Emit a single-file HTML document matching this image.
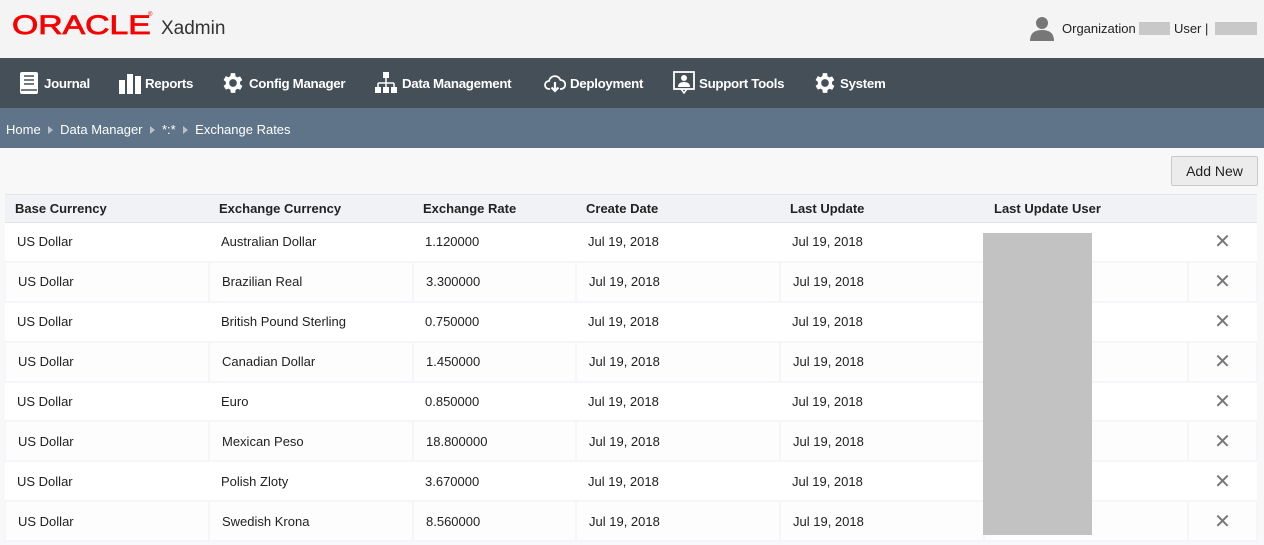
<!DOCTYPE html><html><head><style>
body{margin:0;width:1264px;height:545px;overflow:hidden;background:#f8f8f8;font-family:"Liberation Sans",Arial,sans-serif;position:relative}
.hdr{position:absolute;left:0;top:0;width:1264px;height:58px;background:#f4f4f4}
.nav{position:absolute;left:0;top:58px;width:1264px;height:50px;background:#444f58;color:#fff;font-weight:bold;font-size:13.3px}
.nav span{position:absolute;top:18px;letter-spacing:-0.3px}
.nav svg{position:absolute}
.bc{position:absolute;left:0;top:108px;width:1264px;height:40px;background:#5f7488;color:#fff;font-size:13px}
.bc span{position:absolute;top:14px}
.tri{display:inline-block;width:0;height:0;border-left:5px solid #b7c2cc;border-top:4px solid transparent;border-bottom:4px solid transparent}
table{position:absolute;left:4px;top:194px;width:1254px;border-collapse:collapse;font-size:13px;color:#222}
th{background:#f1f2f6;text-align:left;height:27px;padding:0 0 0 10px;font-size:13px;border-top:1px solid #e3e5ea;border-bottom:1px solid #e0e2e8}
td{height:37.9px;padding:0 0 0 12px;background:#fff}
tr.e td{background:#fdfdfe;border:2px solid #f4f6f9}
.x{color:#777;font-size:20px;text-align:center;padding:0}
</style></head><body>
<div class="hdr">
<div style="position:absolute;left:12px;top:10px;color:#f80000;font-size:27px;-webkit-text-stroke:0.8px #f80000;transform:scaleX(1.25);transform-origin:left;font-family:'Liberation Sans',sans-serif">ORACLE</div>
<div style="position:absolute;left:148px;top:12px;color:#f80000;font-size:6px">®</div>
<div style="position:absolute;left:161px;top:18px;color:#333;font-size:19px">Xadmin</div>
<svg style="position:absolute;left:1029px;top:15px" width="26" height="26"><circle cx="13" cy="8" r="6" fill="#777"/><path d="M1 26 Q1 15 13 15 Q25 15 25 26Z" fill="#777"/></svg>
<div style="position:absolute;left:1062px;top:21px;font-size:13px;color:#222">Organization <span style="display:inline-block;width:31px;height:13px;background:#c8c8c8;vertical-align:-2px"></span> User | <span style="display:inline-block;width:42px;height:13px;background:#c8c8c8;vertical-align:-2px;margin-left:3px"></span></div>
</div>
<div class="nav">
<svg style="left:20px;top:14px" width="18" height="22"><rect x="0" y="0" width="18" height="22" rx="2" fill="#fff"/><g stroke="#444f58" stroke-width="1.5"><line x1="4" y1="4" x2="14" y2="4"/><line x1="4" y1="8" x2="14" y2="8"/><line x1="4" y1="12" x2="14" y2="12"/><line x1="1" y1="18" x2="17" y2="18"/></g></svg>
<span style="left:44px">Journal</span>
<svg style="left:119px;top:14px" width="22" height="22"><rect x="0" y="8" width="6" height="14" fill="#fff"/><rect x="8" y="2" width="6" height="20" fill="#fff"/><rect x="16" y="4" width="6" height="18" fill="#fff"/></svg>
<span style="left:145px">Reports</span>
<svg style="left:221px;top:13px" width="24" height="24" viewBox="2 1 22 22"><path fill="#fff" d="M19.4 13a7.5 7.5 0 000-2l2.1-1.6-2-3.5-2.5 1a7.5 7.5 0 00-1.7-1L15 3h-4l-.4 2.7a7.5 7.5 0 00-1.7 1l-2.5-1-2 3.5L6.5 11a7.5 7.5 0 000 2l-2.1 1.6 2 3.5 2.5-1a7.5 7.5 0 001.7 1L11 21h4l.4-2.7a7.5 7.5 0 001.7-1l2.5 1 2-3.5zM13 15.5A3.5 3.5 0 1113 8.5a3.5 3.5 0 010 7z"/></svg>
<span style="left:249px">Config Manager</span>
<svg style="left:375px;top:14px" width="22" height="22"><rect x="8" y="0" width="6" height="6" fill="#fff"/><path d="M11 6v5M3 11h16M3 11v5M11 11v5M19 11v5" stroke="#fff" stroke-width="1.5"/><rect x="0" y="15" width="6" height="6" fill="#fff"/><rect x="8" y="15" width="6" height="6" fill="#fff"/><rect x="16" y="15" width="6" height="6" fill="#fff"/></svg>
<span style="left:402px">Data Management</span>
<svg style="left:544px;top:14px" width="22" height="22"><path d="M6 17H5a4 4 0 010-8 6 6 0 0111.5-1A4.5 4.5 0 0117 17h-1" fill="none" stroke="#fff" stroke-width="1.8"/><path d="M11 10v9M7.5 15.5L11 19l3.5-3.5" fill="none" stroke="#fff" stroke-width="2.2"/></svg>
<span style="left:570px">Deployment</span>
<svg style="left:673px;top:13px" width="22" height="24"><rect x="1" y="1" width="20" height="17" fill="none" stroke="#fff" stroke-width="1.8"/><circle cx="11" cy="7" r="3" fill="#fff"/><path d="M5 16q0-5 6-5t6 5z" fill="#fff"/><path d="M8 18l3 4 3-4" fill="none" stroke="#fff" stroke-width="1.5"/></svg>
<span style="left:699px">Support Tools</span>
<svg style="left:813px;top:13px" width="24" height="24" viewBox="2 1 22 22"><path fill="#fff" d="M19.4 13a7.5 7.5 0 000-2l2.1-1.6-2-3.5-2.5 1a7.5 7.5 0 00-1.7-1L15 3h-4l-.4 2.7a7.5 7.5 0 00-1.7 1l-2.5-1-2 3.5L6.5 11a7.5 7.5 0 000 2l-2.1 1.6 2 3.5 2.5-1a7.5 7.5 0 001.7 1L11 21h4l.4-2.7a7.5 7.5 0 001.7-1l2.5 1 2-3.5zM13 15.5A3.5 3.5 0 1113 8.5a3.5 3.5 0 010 7z"/></svg>
<span style="left:840px">System</span>
</div>
<div class="bc"><span style="left:6px">Home &nbsp;<i class="tri"></i>&nbsp; Data Manager &nbsp;<i class="tri"></i>&nbsp; *:* &nbsp;<i class="tri"></i>&nbsp; Exchange Rates</span></div>
<div style="position:absolute;left:1171px;top:156px;width:85px;height:28px;border:1px solid #c9c9c9;border-radius:2px;background:#ececec;font-size:14px;color:#222;text-align:center;line-height:28px">Add New</div>
<table>
<tr><th style="width:194px">Base Currency</th><th style="width:194px">Exchange Currency</th><th style="width:153px">Exchange Rate</th><th style="width:194px">Create Date</th><th style="width:194px">Last Update</th><th style="width:194px">Last Update User</th><th></th></tr>
<tr><td>US Dollar</td><td>Australian Dollar</td><td>1.120000</td><td>Jul 19, 2018</td><td>Jul 19, 2018</td><td></td><td class="x">✕</td></tr>
<tr class="e"><td>US Dollar</td><td>Brazilian Real</td><td>3.300000</td><td>Jul 19, 2018</td><td>Jul 19, 2018</td><td></td><td class="x">✕</td></tr>
<tr><td>US Dollar</td><td>British Pound Sterling</td><td>0.750000</td><td>Jul 19, 2018</td><td>Jul 19, 2018</td><td></td><td class="x">✕</td></tr>
<tr class="e"><td>US Dollar</td><td>Canadian Dollar</td><td>1.450000</td><td>Jul 19, 2018</td><td>Jul 19, 2018</td><td></td><td class="x">✕</td></tr>
<tr><td>US Dollar</td><td>Euro</td><td>0.850000</td><td>Jul 19, 2018</td><td>Jul 19, 2018</td><td></td><td class="x">✕</td></tr>
<tr class="e"><td>US Dollar</td><td>Mexican Peso</td><td>18.800000</td><td>Jul 19, 2018</td><td>Jul 19, 2018</td><td></td><td class="x">✕</td></tr>
<tr><td>US Dollar</td><td>Polish Zloty</td><td>3.670000</td><td>Jul 19, 2018</td><td>Jul 19, 2018</td><td></td><td class="x">✕</td></tr>
<tr class="e"><td>US Dollar</td><td>Swedish Krona</td><td>8.560000</td><td>Jul 19, 2018</td><td>Jul 19, 2018</td><td></td><td class="x">✕</td></tr>
</table>
<div style="position:absolute;left:983px;top:233px;width:109px;height:302px;background:#c2c2c2"></div>
</body></html>
